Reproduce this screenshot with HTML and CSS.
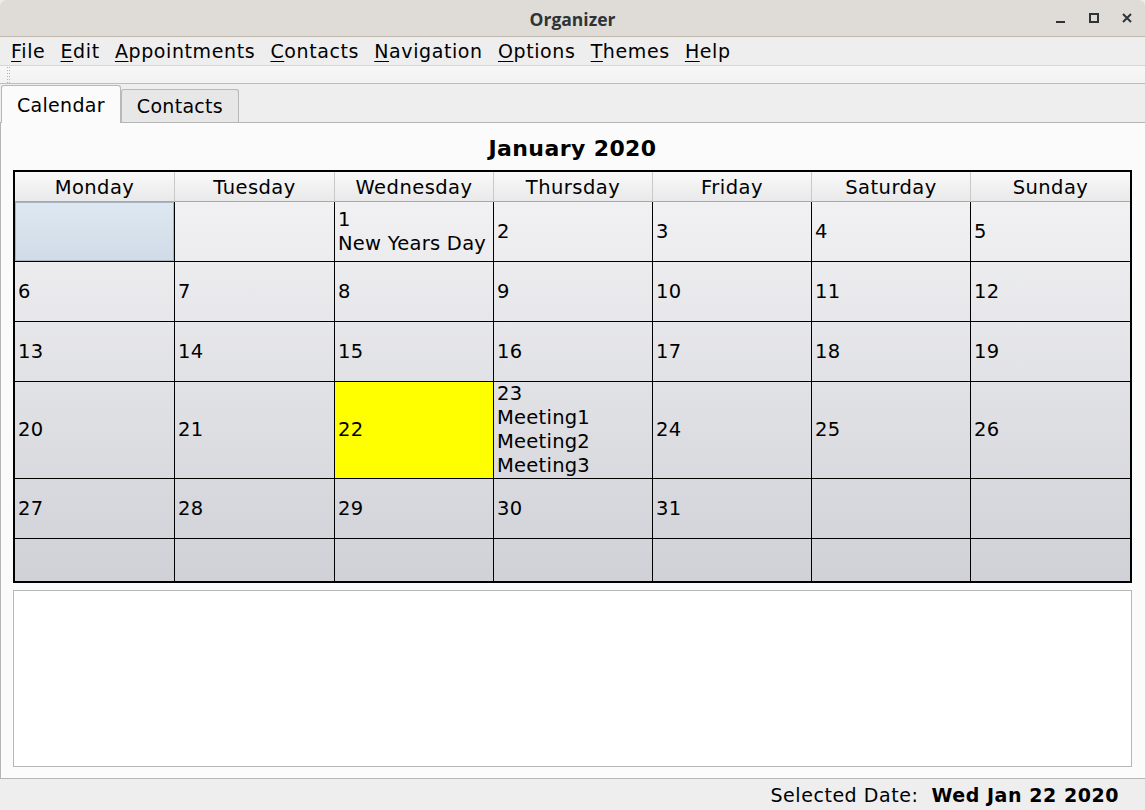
FILE: index.html
```html
<!DOCTYPE html>
<html>
<head>
<meta charset="utf-8">
<link rel="stylesheet" href="styles.css">
</head>
<body>
<div class="window">
  <div class="titlebar">
    <span class="title">Organizer</span>
    <div class="wincontrols">
      <svg class="wc" width="14" height="14" viewBox="0 0 14 14"><rect x="2" y="10" width="9" height="2" fill="#2e3436"/></svg>
      <svg class="wc" width="14" height="14" viewBox="0 0 14 14"><rect x="3" y="3" width="8" height="8" fill="none" stroke="#2e3436" stroke-width="2"/></svg>
      <svg class="wc" width="14" height="14" viewBox="0 0 14 14"><path d="M3 3 L11 11 M11 3 L3 11" stroke="#2e3436" stroke-width="2"/></svg>
    </div>
  </div>
  <div class="menubar">
    <span class="menu"><u>F</u>ile</span>
    <span class="menu"><u>E</u>dit</span>
    <span class="menu"><u>A</u>ppointments</span>
    <span class="menu"><u>C</u>ontacts</span>
    <span class="menu"><u>N</u>avigation</span>
    <span class="menu"><u>O</u>ptions</span>
    <span class="menu"><u>T</u>hemes</span>
    <span class="menu"><u>H</u>elp</span>
  </div>
  <div class="toolbar">
    <svg class="grip" width="4" height="16" viewBox="0 0 4 16">
      <g fill="#b3b3b3">
        <rect x="0" y="0" width="1" height="1"/><rect x="2" y="0" width="1" height="1"/>
        <rect x="0" y="3" width="1" height="1"/><rect x="2" y="3" width="1" height="1"/>
        <rect x="0" y="6" width="1" height="1"/><rect x="2" y="6" width="1" height="1"/>
        <rect x="0" y="9" width="1" height="1"/><rect x="2" y="9" width="1" height="1"/>
        <rect x="0" y="12" width="1" height="1"/><rect x="2" y="12" width="1" height="1"/>
        <rect x="0" y="15" width="1" height="1"/><rect x="2" y="15" width="1" height="1"/>
      </g>
    </svg>
  </div>
  <div class="tabs">
    <div class="tab active">Calendar</div>
    <div class="tab">Contacts</div>
  </div>
  <div class="panel">
    <div class="month-title">January 2020</div>
    <div class="month">
      <div class="hd">Monday</div>
      <div class="hd">Tuesday</div>
      <div class="hd">Wednesday</div>
      <div class="hd">Thursday</div>
      <div class="hd">Friday</div>
      <div class="hd">Saturday</div>
      <div class="hd last">Sunday</div>

      <div class="cell sel"></div>
      <div class="cell"></div>
      <div class="cell">1<br>New Years Day</div>
      <div class="cell">2</div>
      <div class="cell">3</div>
      <div class="cell">4</div>
      <div class="cell last">5</div>

      <div class="cell">6</div>
      <div class="cell">7</div>
      <div class="cell">8</div>
      <div class="cell">9</div>
      <div class="cell">10</div>
      <div class="cell">11</div>
      <div class="cell last">12</div>

      <div class="cell">13</div>
      <div class="cell">14</div>
      <div class="cell">15</div>
      <div class="cell">16</div>
      <div class="cell">17</div>
      <div class="cell">18</div>
      <div class="cell last">19</div>

      <div class="cell">20</div>
      <div class="cell">21</div>
      <div class="cell today">22</div>
      <div class="cell">23<br>Meeting1<br>Meeting2<br>Meeting3</div>
      <div class="cell">24</div>
      <div class="cell">25</div>
      <div class="cell last">26</div>

      <div class="cell">27</div>
      <div class="cell">28</div>
      <div class="cell">29</div>
      <div class="cell">30</div>
      <div class="cell">31</div>
      <div class="cell"></div>
      <div class="cell last"></div>

      <div class="cell bottom"></div>
      <div class="cell bottom"></div>
      <div class="cell bottom"></div>
      <div class="cell bottom"></div>
      <div class="cell bottom"></div>
      <div class="cell bottom"></div>
      <div class="cell bottom last"></div>
    </div>
    <div class="notes"></div>
  </div>
  <div class="statusbar">
    <span class="status-label">Selected Date:</span>
    <span class="status-value">Wed Jan 22 2020</span>
  </div>
</div>
</body>
</html>
```

FILE: styles.css
```css
html, body {
  margin: 0;
  padding: 0;
}
body {
  width: 1145px;
  height: 810px;
  overflow: hidden;
  background: #eeeeee;
  font-family: "DejaVu Sans", sans-serif;
  color: #000;
}
.window {
  display: flex;
  flex-direction: column;
  height: 810px;
}
.titlebar {
  height: 36px;
  background: #dfdcd8;
  border-bottom: 1px solid #c1b8ae;
  border-radius: 6px 6px 0 0;
  display: flex;
  align-items: center;
  justify-content: center;
  position: relative;
  flex: none;
}
.title {
  font-family: "Open Sans", "DejaVu Sans", sans-serif;
  font-weight: bold;
  font-size: 17.5px;
  color: #2e3436;
  margin-top: 1px;
}
.wincontrols {
  position: absolute;
  right: 11px;
  top: 11px;
  display: flex;
  gap: 19px;
}
.menubar {
  height: 28px;
  display: flex;
  align-items: center;
  padding-left: 3.5px;
  background: #eeeeee;
  flex: none;
}
.menu {
  font-size: 19px;
  letter-spacing: 0.6px;
  padding: 0 7.6px;
  line-height: 28px;
}
.menu u {
  text-decoration-thickness: 1px;
  text-underline-offset: 3px;
}
.toolbar {
  height: 17px;
  background: linear-gradient(#f7f7f7, #f2f2f2);
  border-top: 1px solid #d6d6d6;
  border-bottom: 1px solid #bdbdbd;
  flex: none;
  display: flex;
  align-items: center;
}
.grip {
  display: block;
  margin-left: 7px;
}
.tabs {
  height: 38px;
  display: flex;
  align-items: flex-end;
  padding-left: 1px;
  flex: none;
}
.tab {
  font-size: 19px;
  letter-spacing: 0.3px;
  height: 33px;
  padding: 0 15px;
  display: flex;
  align-items: center;
  background: #e7e7e7;
  border: 1px solid #b8b8b8;
  border-bottom: none;
  border-radius: 3px 3px 0 0;
  box-sizing: border-box;
}
.tab.active {
  height: 38px;
  background: #fbfbfb;
  margin-bottom: -1px;
  position: relative;
  z-index: 1;
}
.panel {
  flex: none;
  height: 657px;
  box-sizing: border-box;
  background: #fbfbfb;
  border: 1px solid #b5b5b5;
  border-right: none;
  padding: 0 13px 0 12px;
  display: flex;
  flex-direction: column;
}
.month-title {
  font-weight: bold;
  font-size: 22px;
  letter-spacing: 0.4px;
  text-align: center;
  height: 47px;
  line-height: 52px;
}
.month {
  border: 2px solid #000;
  display: grid;
  grid-template-columns: 160px 160px repeat(5, 159px);
  grid-template-rows: 30px 60px 60px 60px 97px 60px 42px;
  background: linear-gradient(#f1f1f3 30px, #d0d1d7 100%);
}
.hd {
  background: linear-gradient(#f9f9f9, #e9e9e9);
  border-right: 1px solid #c9c9c9;
  border-bottom: 1px solid #a8a8a8;
  font-size: 19.5px;
  letter-spacing: 0.45px;
  display: flex;
  align-items: center;
  justify-content: center;
  padding-top: 1px;
}
.hd.last { border-right: none; }
.cell {
  border-right: 1px solid #000;
  border-bottom: 1px solid #000;
  font-size: 19.5px;
  letter-spacing: 0.25px;
  line-height: 24px;
  padding-left: 3px;
  display: flex;
  flex-direction: column;
  justify-content: center;
}
.cell.last { border-right: none; }
.cell.bottom { border-bottom: none; }
.cell.sel {
  background: linear-gradient(#dde8f2, #d0dbe7);
  box-shadow: inset 1px 1px 0 #a9b4bf, inset -1px -1px 0 #a9b4bf;
}
.cell.today {
  background: #ffff00;
}
.notes {
  margin-top: 7px;
  height: 177px;
  background: #fff;
  border: 1px solid #b7b7b7;
  box-sizing: border-box;
}
.statusbar {
  flex: 1;
  display: flex;
  justify-content: flex-end;
  align-items: center;
  padding-right: 26px;
  font-size: 19px;
  letter-spacing: 0.55px;
  gap: 13px;
  padding-top: 1px;
}
.status-value {
  font-weight: bold;
}
```
